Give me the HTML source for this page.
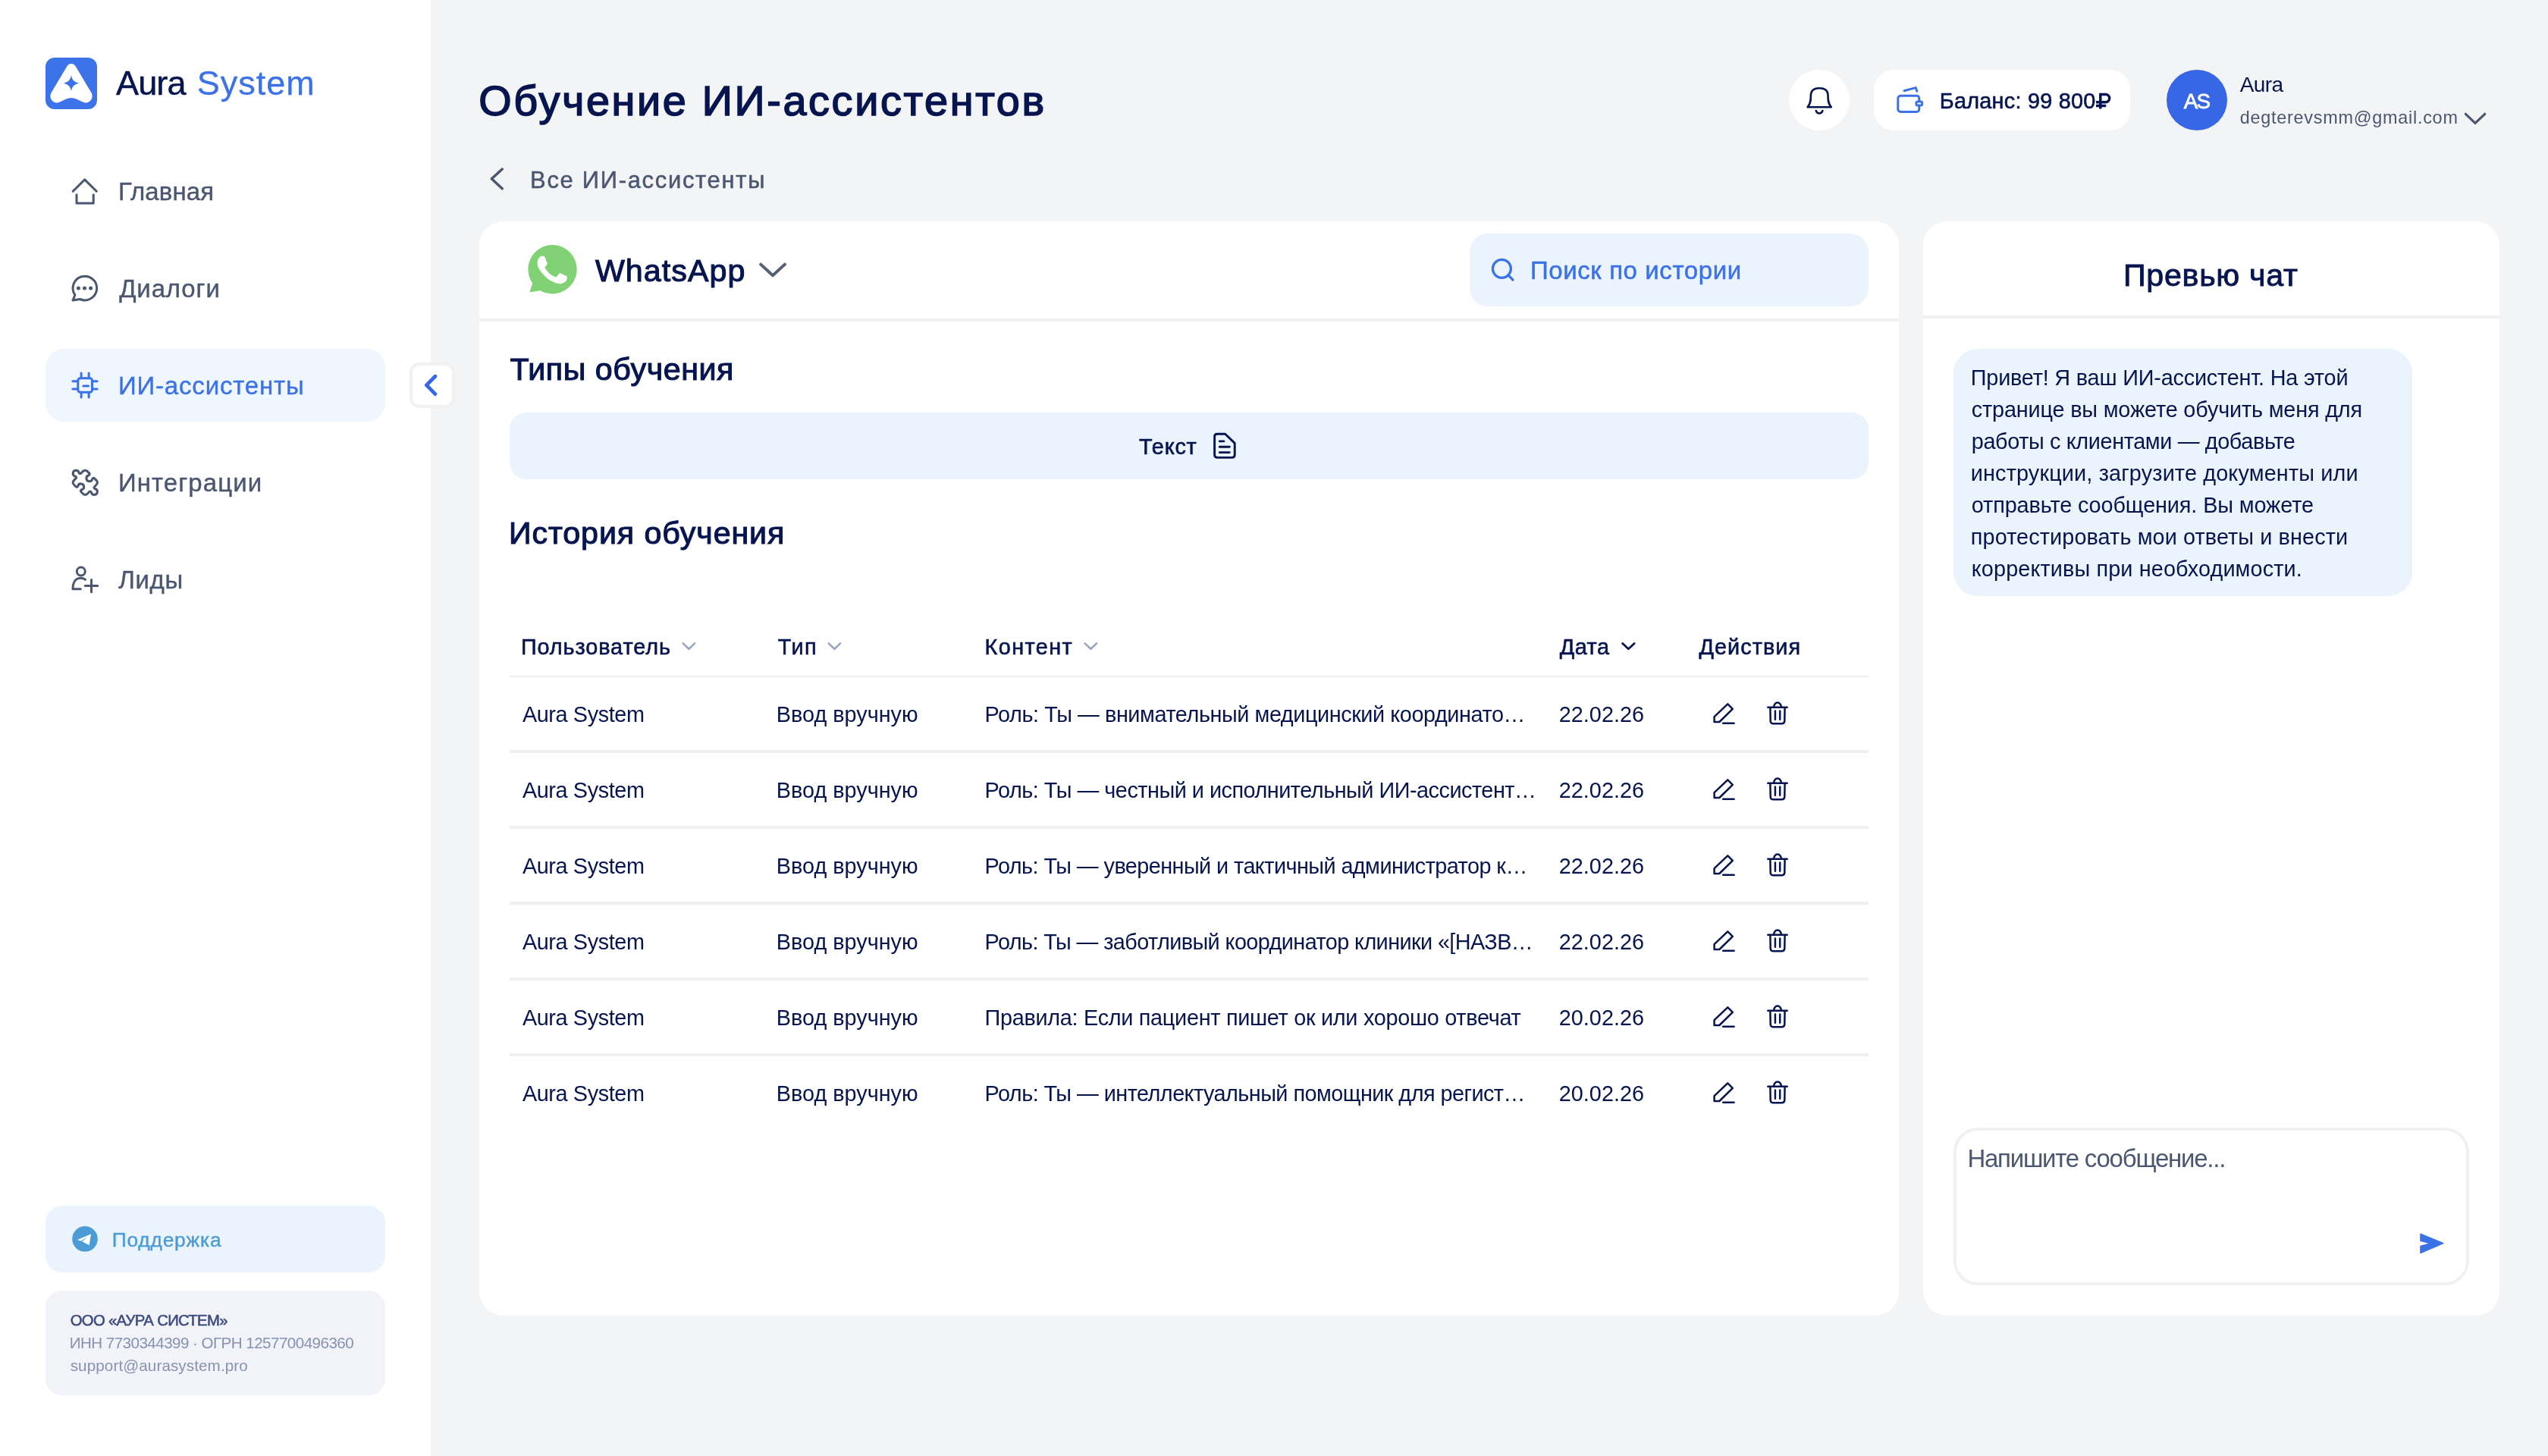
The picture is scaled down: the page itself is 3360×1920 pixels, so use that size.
<!DOCTYPE html>
<html lang="ru">
<head>
<meta charset="utf-8">
<meta name="viewport" content="width=3360">
<title>Обучение ИИ-ассистентов — Aura System</title>
<style>
*{box-sizing:border-box;margin:0;padding:0}
html,body{width:3360px;height:1920px;overflow:hidden}
body{position:relative;background:#f3f4f6;font-family:"Liberation Sans",sans-serif;color:#06154f}
.t{position:absolute;white-space:nowrap;line-height:1;font-weight:400;font-style:normal}
.abs,.ic,aside,main,section,header,nav,.tr,.rl{position:absolute}
svg{display:block;overflow:visible}
#app{position:absolute;left:0;top:0;width:3360px;height:1920px;will-change:transform}
aside{left:0;top:0;width:568px;height:1920px;background:#fff}
.logo{left:60px;top:76px;width:68px;height:68px;border-radius:12px;background:#3d73ea}
.active{left:60px;top:460px;width:448px;height:96px;border-radius:24px;background:#eff6fe}
.collapse{left:540px;top:478px;width:60px;height:60px;border-radius:13px;background:#fff;border:4px solid #f1f1f2}
.support{left:60px;top:1590px;width:448px;height:88px;border-radius:22px;background:#ebf3fc}
.info{left:60px;top:1702px;width:448px;height:138px;border-radius:22px;background:#f1f3f8}
.bell{left:2359px;top:92px;width:80px;height:80px;border-radius:50%;background:#fff}
.balance{left:2471px;top:92px;width:338px;height:80px;border-radius:26px;background:#fff}
.avatar{left:2857px;top:92px;width:80px;height:80px;border-radius:50%;background:#3767e4}
.card{left:632px;top:292px;width:1872px;height:1443px;border-radius:32px;background:#fff}
.chat{left:2536px;top:292px;width:760px;height:1443px;border-radius:32px;background:#fff}
.hr1{left:632px;top:420px;width:1872px;height:4px;background:#f0f0f1}
.hr2{left:2536px;top:416px;width:760px;height:4px;background:#f0f0f1}
.search{left:1938px;top:308px;width:526px;height:96px;border-radius:24px;background:#ebf3fd}
.typebtn{left:672px;top:544px;width:1792px;height:88px;border-radius:22px;background:#ebf3fd}
.thl{left:672px;top:891px;width:1792px;height:2px;background:#efeff0}
.rl{left:672px;width:1792px;height:4px;background:#f0f0f1}
.tr{left:0;top:0}
.bubble{left:2576px;top:460px;width:605px;height:326px;border-radius:32px;background:#ebf3fd}
.input{left:2576px;top:1487px;width:680px;height:208px;border-radius:32px;background:#fff;border:4px solid #f1f1f2}
</style>
</head>
<body>
<div id="app">

<!-- ===== SIDEBAR ===== -->
<aside>
<div class="abs logo"></div>
<svg class="ic" style="left:60px;top:76px" width="68" height="68" viewBox="60 76 68 68">
<path fill="#fff" d="M88.3 87.6 C90.5 82.8 97.5 82.8 99.7 87.6 L120.6 122.5 C124.5 130 117 138.5 109 134.5 C102 131 98.5 129.3 94 129.3 C89.5 129.3 86 131 79 134.5 C71 138.5 63.5 130 67.4 122.5 Z"/>
<path fill="#3d73ea" d="M93.9 99.1 C94.9 105.5 98.2 108.8 104.6 109.8 C98.2 110.8 94.9 114.1 93.9 120.5 C92.9 114.1 89.6 110.8 83.2 109.8 C89.6 108.8 92.9 105.5 93.9 99.1 Z"/>
</svg>
<span class="t" style="left:153.0px;top:87.0px;font-size:45px;letter-spacing:-0.876px;color:#06154f;-webkit-text-stroke:0.5px #06154f;">Aura</span><span class="t" style="left:259.7px;top:87.0px;font-size:45px;letter-spacing:0.991px;color:#3b72e8;-webkit-text-stroke:0.3px #3b72e8;">System</span>

<nav>
<svg class="ic" style="left:92px;top:232px" width="40" height="40" viewBox="92 232 40 40" fill="none" stroke="#4b5670" stroke-width="3" stroke-linecap="round" stroke-linejoin="round">
<path d="M96.2 252.2 L111.7 236.9 L127.3 252.2"/><path d="M101 256.8 V268 H123.2 V256.8"/>
</svg>
<span class="t" style="left:155.9px;top:237.0px;font-size:32.96px;letter-spacing:0.120px;color:#4b5670;-webkit-text-stroke:0.4px #4b5670;">Главная</span>
<svg class="ic" style="left:92px;top:360px" width="40" height="40" viewBox="92 360 40 40" fill="none" stroke="#4b5670" stroke-width="3" stroke-linecap="round" stroke-linejoin="round">
<path d="M96 396 L98.9 389 A15.8 15.8 0 1 1 105.6 394.5 Z"/>
<g fill="#4b5670" stroke="none"><circle cx="103.4" cy="379.9" r="2.5"/><circle cx="111.5" cy="379.9" r="2.5"/><circle cx="119.6" cy="379.9" r="2.5"/></g>
</svg>
<span class="t" style="left:157.2px;top:365.0px;font-size:32.96px;letter-spacing:0.867px;color:#4b5670;-webkit-text-stroke:0.4px #4b5670;">Диалоги</span>
<div class="abs active"></div>
<svg class="ic" style="left:92px;top:488px" width="40" height="40" viewBox="92 488 40 40" fill="none" stroke="#3b72e8" stroke-width="3" stroke-linecap="round" stroke-linejoin="round">
<rect x="102.8" y="498.7" width="18.7" height="18.6" rx="3"/>
<path d="M107.1 492 V498.7 M117.1 492 V498.7 M107.1 517.3 V523.9 M117.1 517.3 V523.9 M95.9 502.8 H102.8 M95.9 513.1 H102.8 M121.5 502.8 H128 M121.5 513.1 H128 M109.8 509 H116.6"/>
</svg>
<span class="t" style="left:155.9px;top:493.0px;font-size:32.96px;letter-spacing:0.854px;color:#3b72e8;-webkit-text-stroke:0.4px #3b72e8;">ИИ-ассистенты</span>
<svg class="ic" style="left:92.8px;top:616.7px" width="38.6" height="38.6" viewBox="0 0 24 24" fill="none" stroke="#4b5670" stroke-width="1.9" stroke-linecap="round" stroke-linejoin="round">
<path transform="matrix(-1 0 0 1 24 0)" d="M15.39 4.39a1 1 0 0 0 1.68-.474 2.5 2.5 0 1 1 3.014 3.015 1 1 0 0 0-.474 1.68l1.683 1.682a2.414 2.414 0 0 1 0 3.414L19.61 15.39a1 1 0 0 1-1.68-.474 2.5 2.5 0 1 0-3.014 3.015 1 1 0 0 1 .474 1.68l-1.683 1.682a2.414 2.414 0 0 1-3.414 0L8.61 19.61a1 1 0 0 0-1.68.474 2.5 2.5 0 1 1-3.014-3.015 1 1 0 0 0 .474-1.68l-1.683-1.682a2.414 2.414 0 0 1 0-3.414L4.39 8.61a1 1 0 0 1 1.68.474 2.5 2.5 0 1 0 3.014-3.015 1 1 0 0 1-.474-1.68l1.683-1.682a2.414 2.414 0 0 1 3.414 0z"/>
</svg>
<span class="t" style="left:155.9px;top:621.0px;font-size:32.96px;letter-spacing:1.101px;color:#4b5670;-webkit-text-stroke:0.4px #4b5670;">Интеграции</span>
<svg class="ic" style="left:92px;top:744px" width="40" height="40" viewBox="92 744 40 40" fill="none" stroke="#4b5670" stroke-width="3" stroke-linecap="round" stroke-linejoin="round">
<circle cx="106.8" cy="753.6" r="5.5"/>
<path d="M112.5 764.3 C109 761.5 103 761.5 100 764.5 C97 767.5 96 772 96 776.7 H106.3"/>
<path d="M112.3 772.6 H128.7 M120.5 764.4 V780.8"/>
</svg>
<span class="t" style="left:156.3px;top:749.0px;font-size:32.96px;letter-spacing:0.613px;color:#4b5670;-webkit-text-stroke:0.4px #4b5670;">Лиды</span>
</nav>

<div class="abs collapse"></div>
<svg class="ic" style="left:552px;top:490px" width="36" height="36" viewBox="552 490 36 36" fill="none" stroke="#3567ec" stroke-width="4.8" stroke-linecap="round" stroke-linejoin="round"><path d="M573.9 496.3 L562.4 507.9 L573.9 519.6"/></svg>

<div class="abs support"></div>
<svg class="ic" style="left:95px;top:1617px" width="34" height="34" viewBox="95 1617 34 34">
<circle cx="112" cy="1633.8" r="16.8" fill="#4a9bd6"/>
<path fill="#fff" d="M101.9 1635 L120 1627.3 L117.7 1641.9 L108.3 1637.2 L115.3 1631.1 L106.8 1636.6 Z"/>
</svg>
<span class="t" style="left:147.7px;top:1622.0px;font-size:26.3px;letter-spacing:0.830px;color:#4a9bd6;-webkit-text-stroke:0.4px #4a9bd6;">Поддержка</span>
<div class="abs info"></div>
<span class="t" style="left:92.7px;top:1731.0px;font-size:20.3px;letter-spacing:-0.662px;color:#3d4c7e;-webkit-text-stroke:0.55px #3d4c7e;">ООО «АУРА СИСТЕМ»</span><span class="t" style="left:91.7px;top:1761.0px;font-size:20.6px;letter-spacing:-0.545px;color:#8792b3;">ИНН 7730344399 · ОГРН 1257700496360</span><span class="t" style="left:92.7px;top:1791.0px;font-size:20.6px;letter-spacing:0.121px;color:#8792b3;">support@aurasystem.pro</span>
</aside>

<!-- ===== HEADER ===== -->
<header>
<h1 class="t" style="left:631.2px;top:105.0px;font-size:55.8px;letter-spacing:2.647px;color:#06154f;-webkit-text-stroke:1.6px #06154f;">Обучение ИИ-ассистентов</h1>
<svg class="ic" style="left:640px;top:218px" width="32" height="36" viewBox="640 218 32 36" fill="none" stroke="#4b5670" stroke-width="3.5" stroke-linecap="round" stroke-linejoin="round"><path d="M662.3 223 L648.3 235.8 L662.3 248.7"/></svg>
<span class="t" style="left:699.1px;top:223.0px;font-size:30.9px;letter-spacing:1.727px;color:#4b5670;-webkit-text-stroke:0.5px #4b5670;">Все ИИ-ассистенты</span>
<div class="abs bell"></div>
<svg class="ic" style="left:2379px;top:112px" width="40" height="40" viewBox="2379 112 40 40" fill="none" stroke="#06154f" stroke-width="2.6" stroke-linecap="round" stroke-linejoin="round">
<path d="M2383.6 141.2 C2388.6 136 2387.6 130 2388 124 C2388.6 118.5 2393 116.2 2399.2 116.2 C2405.4 116.2 2409.8 118.5 2410.4 124 C2410.8 130 2409.8 136 2414.8 141.2 Z"/>
<path d="M2394.8 146 C2396 150.6 2402.2 150.6 2403.4 146"/>
</svg>
<div class="abs balance"></div>
<svg class="ic" style="left:2499px;top:112px" width="40" height="40" viewBox="2499 112 40 40" fill="none" stroke="#3b72e8" stroke-width="3" stroke-linecap="round" stroke-linejoin="round">
<rect x="2502.8" y="126.2" width="28" height="21.3" rx="3.5"/>
<rect x="2526.9" y="134.1" width="7.8" height="4.8" rx="2" fill="#fff"/>
<path d="M2510.9 119.7 L2526.3 115.6 L2527.8 120.2"/>
</svg>
<span class="t" style="left:2557.8px;top:119.0px;font-size:28.84px;letter-spacing:0.246px;color:#06154f;-webkit-text-stroke:0.6px #06154f;">Баланс: 99 800</span>
<svg class="ic" style="left:2760px;top:118px" width="28" height="30" viewBox="2760 118 28 30" fill="none" stroke="#06154f" stroke-width="3.5" stroke-linejoin="miter"><path d="M2769.8 143.4 V124.5 H2776.6 A5.1 5.1 0 0 1 2776.6 134.7 H2764 M2764 139.4 H2777.2"/></svg>
<div class="abs avatar"></div>
<span class="t" style="left:2879.7px;top:120.0px;font-size:27.81px;letter-spacing:-1.840px;color:#ffffff;-webkit-text-stroke:0.8px #ffffff;">AS</span><span class="t" style="left:2953.7px;top:98.0px;font-size:28px;letter-spacing:-0.591px;color:#06154f;">Aura</span><span class="t" style="left:2953.7px;top:144.0px;font-size:23.4px;letter-spacing:0.758px;color:#4b5670;">degterevsmm@gmail.com</span>
<svg class="ic" style="left:3246px;top:144px" width="36" height="24" viewBox="3246 144 36 24" fill="none" stroke="#4b5670" stroke-width="3.2" stroke-linecap="round" stroke-linejoin="round"><path d="M3251.4 150.3 L3264 162.3 L3276.7 150.3"/></svg>
</header>

<!-- ===== MAIN CARD ===== -->
<main>
<div class="abs card"></div>
<svg class="ic" style="left:696px;top:323px" width="65" height="65" viewBox="0 0 65 65">
<path fill="#80d275" d="M32.3 0 A32.2 32.2 0 1 1 16.5 60.2 L2.5 62.3 L6.2 50.6 A32.2 32.2 0 0 1 32.3 0 Z"/>
<g transform="translate(32.3 32.5) scale(1.22) translate(-32.5 -31.7) translate(0.3 0) scale(2.667)"><path fill="#fff" d="M17.472 14.382c-.297-.149-1.758-.867-2.03-.967-.273-.099-.471-.148-.67.15-.197.297-.767.966-.94 1.164-.173.199-.347.223-.644.075-.297-.15-1.255-.463-2.39-1.475-.883-.788-1.48-1.761-1.653-2.059-.173-.297-.018-.458.13-.606.134-.133.298-.347.446-.52.149-.174.198-.298.298-.497.099-.198.05-.371-.025-.52-.075-.149-.669-1.612-.916-2.207-.242-.579-.487-.5-.669-.51-.173-.008-.371-.01-.57-.01-.198 0-.52.074-.792.372-.272.297-1.04 1.016-1.04 2.479 0 1.462 1.065 2.875 1.213 3.074.149.198 2.096 3.2 5.077 4.487.709.306 1.262.489 1.694.625.712.227 1.36.195 1.871.118.571-.085 1.758-.719 2.006-1.413.248-.694.248-1.289.173-1.413-.074-.124-.272-.198-.57-.347z"/></g>
</svg>
<span class="t" style="left:784.9px;top:337.0px;font-size:41.2px;letter-spacing:1.057px;color:#06154f;-webkit-text-stroke:1.1px #06154f;">WhatsApp</span>
<svg class="ic" style="left:998px;top:342px" width="44" height="28" viewBox="998 342 44 28" fill="none" stroke="#555f75" stroke-width="4" stroke-linecap="round" stroke-linejoin="round"><path d="M1003.2 348.6 L1019 363.2 L1034.9 348.6"/></svg>
<div class="abs search"></div>
<svg class="ic" style="left:1964px;top:338px" width="36" height="36" viewBox="1964 338 36 36" fill="none" stroke="#3b72e8" stroke-width="3.2" stroke-linecap="round"><circle cx="1980.4" cy="354.3" r="12"/><path d="M1989.2 363.2 L1995 369.1"/></svg>
<span class="t" style="left:2018.0px;top:341.0px;font-size:32.96px;letter-spacing:0.616px;color:#3b72e8;-webkit-text-stroke:0.5px #3b72e8;">Поиск по истории</span>
<div class="abs hr1"></div>
<h2 class="t" style="left:672.4px;top:467.0px;font-size:41.2px;letter-spacing:0.549px;color:#06154f;-webkit-text-stroke:1.1px #06154f;">Типы обучения</h2>
<div class="abs typebtn"></div>
<span class="t" style="left:1502.1px;top:575.0px;font-size:28.84px;letter-spacing:0.782px;color:#06154f;-webkit-text-stroke:0.6px #06154f;">Текст</span>
<svg class="ic" style="left:1598px;top:568px" width="34" height="40" viewBox="1598 568 34 40" fill="none" stroke="#06154f" stroke-width="2.9" stroke-linecap="round" stroke-linejoin="round">
<path d="M1605.2 572.2 H1615.6 L1628.2 584.4 V599.8 Q1628.2 603.4 1624.6 603.4 H1605.2 Q1601.6 603.4 1601.6 599.8 V575.8 Q1601.6 572.2 1605.2 572.2 Z"/>
<path d="M1608.3 581.9 H1613.9 M1608.3 589.2 H1621.3 M1608.3 596.6 H1621.3"/>
</svg>
<h2 class="t" style="left:671.0px;top:683.0px;font-size:41.2px;letter-spacing:0.902px;color:#06154f;-webkit-text-stroke:1.1px #06154f;">История обучения</h2>
<span class="t" style="left:686.9px;top:839.0px;font-size:28.84px;letter-spacing:0.904px;color:#06154f;-webkit-text-stroke:0.6px #06154f;">Пользователь</span><span class="t" style="left:1025.8px;top:839.0px;font-size:28.84px;letter-spacing:1.427px;color:#06154f;-webkit-text-stroke:0.6px #06154f;">Тип</span><span class="t" style="left:1298.5px;top:839.0px;font-size:28.84px;letter-spacing:1.404px;color:#06154f;-webkit-text-stroke:0.6px #06154f;">Контент</span><span class="t" style="left:2056.7px;top:839.0px;font-size:28.84px;letter-spacing:0.499px;color:#06154f;-webkit-text-stroke:0.6px #06154f;">Дата</span><span class="t" style="left:2240.5px;top:839.0px;font-size:28.84px;letter-spacing:1.029px;color:#06154f;-webkit-text-stroke:0.6px #06154f;">Действия</span>
<svg class="ic" style="left:896px;top:842px" width="24" height="20" viewBox="896 842 24 20" fill="none" stroke="#9aa5c4" stroke-width="2.6" stroke-linecap="round" stroke-linejoin="round"><path d="M900.6 848.4 L908.4 855.8 L916.1 848.4"/></svg>
<svg class="ic" style="left:1088px;top:842px" width="24" height="20" viewBox="896 842 24 20" fill="none" stroke="#9aa5c4" stroke-width="2.6" stroke-linecap="round" stroke-linejoin="round"><path d="M900.6 848.4 L908.4 855.8 L916.1 848.4"/></svg>
<svg class="ic" style="left:1426px;top:842px" width="24" height="20" viewBox="896 842 24 20" fill="none" stroke="#9aa5c4" stroke-width="2.6" stroke-linecap="round" stroke-linejoin="round"><path d="M900.6 848.4 L908.4 855.8 L916.1 848.4"/></svg>
<svg class="ic" style="left:2135px;top:842px" width="24" height="20" viewBox="896 842 24 20" fill="none" stroke="#06154f" stroke-width="2.8" stroke-linecap="round" stroke-linejoin="round"><path d="M900.6 848.4 L908.4 855.8 L916.1 848.4"/></svg>
<div class="abs thl"></div>
<div class="tr"><span class="t" style="left:688.9px;top:928.0px;font-size:28.84px;letter-spacing:-0.390px;color:#06154f;">Aura System</span><span class="t" style="left:1023.8px;top:928.0px;font-size:28.84px;letter-spacing:-0.004px;color:#06154f;">Ввод вручную</span><span class="t" style="left:1298.6px;top:928.0px;font-size:28.84px;letter-spacing:-0.430px;color:#06154f;">Роль: Ты — внимательный медицинский координато…</span><span class="t" style="left:2055.7px;top:928.0px;font-size:28.84px;letter-spacing:0.031px;color:#06154f;">22.02.26</span>
<svg class="ic" style="left:2256px;top:922px" width="36" height="36" viewBox="2256 922 36 36" fill="none" stroke="#06154f" stroke-width="2.5" stroke-linejoin="round" stroke-linecap="round"><path d="M2278.3 928.3 L2284.8 934.8 L2267.3 952 L2260.6 952 L2260.6 945.2 Z"/>
<path d="M2272.2 953.7 H2286.6"/></svg>
<svg class="ic" style="left:2326px;top:922px" width="36" height="36" viewBox="2326 922 36 36" fill="none" stroke="#06154f" stroke-width="2.5" stroke-linejoin="round" stroke-linecap="round"><path d="M2331.3 932.8 H2356.7"/>
<path d="M2339.1 932.8 A4.9 6.4 0 0 1 2348.9 932.8"/>
<path d="M2334.4 933.5 L2334.7 950.4 Q2334.8 954.3 2338.7 954.3 H2349.3 Q2353.2 954.3 2353.3 950.4 L2353.6 933.5"/>
<path d="M2340.9 937.6 V948.8 M2347.2 937.6 V948.8"/></svg>
<i class="rl" style="top:989px"></i></div>
<div class="tr"><span class="t" style="left:688.9px;top:1028.0px;font-size:28.84px;letter-spacing:-0.390px;color:#06154f;">Aura System</span><span class="t" style="left:1023.8px;top:1028.0px;font-size:28.84px;letter-spacing:-0.004px;color:#06154f;">Ввод вручную</span><span class="t" style="left:1298.6px;top:1028.0px;font-size:28.84px;letter-spacing:-0.492px;color:#06154f;">Роль: Ты — честный и исполнительный ИИ-ассистент…</span><span class="t" style="left:2055.7px;top:1028.0px;font-size:28.84px;letter-spacing:0.031px;color:#06154f;">22.02.26</span>
<svg class="ic" style="left:2256px;top:1022px" width="36" height="36" viewBox="2256 922 36 36" fill="none" stroke="#06154f" stroke-width="2.5" stroke-linejoin="round" stroke-linecap="round"><path d="M2278.3 928.3 L2284.8 934.8 L2267.3 952 L2260.6 952 L2260.6 945.2 Z"/>
<path d="M2272.2 953.7 H2286.6"/></svg>
<svg class="ic" style="left:2326px;top:1022px" width="36" height="36" viewBox="2326 922 36 36" fill="none" stroke="#06154f" stroke-width="2.5" stroke-linejoin="round" stroke-linecap="round"><path d="M2331.3 932.8 H2356.7"/>
<path d="M2339.1 932.8 A4.9 6.4 0 0 1 2348.9 932.8"/>
<path d="M2334.4 933.5 L2334.7 950.4 Q2334.8 954.3 2338.7 954.3 H2349.3 Q2353.2 954.3 2353.3 950.4 L2353.6 933.5"/>
<path d="M2340.9 937.6 V948.8 M2347.2 937.6 V948.8"/></svg>
<i class="rl" style="top:1089px"></i></div>
<div class="tr"><span class="t" style="left:688.9px;top:1128.0px;font-size:28.84px;letter-spacing:-0.390px;color:#06154f;">Aura System</span><span class="t" style="left:1023.8px;top:1128.0px;font-size:28.84px;letter-spacing:-0.004px;color:#06154f;">Ввод вручную</span><span class="t" style="left:1298.6px;top:1128.0px;font-size:28.84px;letter-spacing:-0.562px;color:#06154f;">Роль: Ты — уверенный и тактичный администратор к…</span><span class="t" style="left:2055.7px;top:1128.0px;font-size:28.84px;letter-spacing:0.031px;color:#06154f;">22.02.26</span>
<svg class="ic" style="left:2256px;top:1122px" width="36" height="36" viewBox="2256 922 36 36" fill="none" stroke="#06154f" stroke-width="2.5" stroke-linejoin="round" stroke-linecap="round"><path d="M2278.3 928.3 L2284.8 934.8 L2267.3 952 L2260.6 952 L2260.6 945.2 Z"/>
<path d="M2272.2 953.7 H2286.6"/></svg>
<svg class="ic" style="left:2326px;top:1122px" width="36" height="36" viewBox="2326 922 36 36" fill="none" stroke="#06154f" stroke-width="2.5" stroke-linejoin="round" stroke-linecap="round"><path d="M2331.3 932.8 H2356.7"/>
<path d="M2339.1 932.8 A4.9 6.4 0 0 1 2348.9 932.8"/>
<path d="M2334.4 933.5 L2334.7 950.4 Q2334.8 954.3 2338.7 954.3 H2349.3 Q2353.2 954.3 2353.3 950.4 L2353.6 933.5"/>
<path d="M2340.9 937.6 V948.8 M2347.2 937.6 V948.8"/></svg>
<i class="rl" style="top:1189px"></i></div>
<div class="tr"><span class="t" style="left:688.9px;top:1228.0px;font-size:28.84px;letter-spacing:-0.390px;color:#06154f;">Aura System</span><span class="t" style="left:1023.8px;top:1228.0px;font-size:28.84px;letter-spacing:-0.004px;color:#06154f;">Ввод вручную</span><span class="t" style="left:1298.6px;top:1228.0px;font-size:28.84px;letter-spacing:-0.590px;color:#06154f;">Роль: Ты — заботливый координатор клиники «[НАЗВ…</span><span class="t" style="left:2055.7px;top:1228.0px;font-size:28.84px;letter-spacing:0.031px;color:#06154f;">22.02.26</span>
<svg class="ic" style="left:2256px;top:1222px" width="36" height="36" viewBox="2256 922 36 36" fill="none" stroke="#06154f" stroke-width="2.5" stroke-linejoin="round" stroke-linecap="round"><path d="M2278.3 928.3 L2284.8 934.8 L2267.3 952 L2260.6 952 L2260.6 945.2 Z"/>
<path d="M2272.2 953.7 H2286.6"/></svg>
<svg class="ic" style="left:2326px;top:1222px" width="36" height="36" viewBox="2326 922 36 36" fill="none" stroke="#06154f" stroke-width="2.5" stroke-linejoin="round" stroke-linecap="round"><path d="M2331.3 932.8 H2356.7"/>
<path d="M2339.1 932.8 A4.9 6.4 0 0 1 2348.9 932.8"/>
<path d="M2334.4 933.5 L2334.7 950.4 Q2334.8 954.3 2338.7 954.3 H2349.3 Q2353.2 954.3 2353.3 950.4 L2353.6 933.5"/>
<path d="M2340.9 937.6 V948.8 M2347.2 937.6 V948.8"/></svg>
<i class="rl" style="top:1289px"></i></div>
<div class="tr"><span class="t" style="left:688.9px;top:1328.0px;font-size:28.84px;letter-spacing:-0.390px;color:#06154f;">Aura System</span><span class="t" style="left:1023.8px;top:1328.0px;font-size:28.84px;letter-spacing:-0.004px;color:#06154f;">Ввод вручную</span><span class="t" style="left:1298.6px;top:1328.0px;font-size:28.84px;letter-spacing:-0.294px;color:#06154f;">Правила: Если пациент пишет ок или хорошо отвечат</span><span class="t" style="left:2055.7px;top:1328.0px;font-size:28.84px;letter-spacing:0.031px;color:#06154f;">20.02.26</span>
<svg class="ic" style="left:2256px;top:1322px" width="36" height="36" viewBox="2256 922 36 36" fill="none" stroke="#06154f" stroke-width="2.5" stroke-linejoin="round" stroke-linecap="round"><path d="M2278.3 928.3 L2284.8 934.8 L2267.3 952 L2260.6 952 L2260.6 945.2 Z"/>
<path d="M2272.2 953.7 H2286.6"/></svg>
<svg class="ic" style="left:2326px;top:1322px" width="36" height="36" viewBox="2326 922 36 36" fill="none" stroke="#06154f" stroke-width="2.5" stroke-linejoin="round" stroke-linecap="round"><path d="M2331.3 932.8 H2356.7"/>
<path d="M2339.1 932.8 A4.9 6.4 0 0 1 2348.9 932.8"/>
<path d="M2334.4 933.5 L2334.7 950.4 Q2334.8 954.3 2338.7 954.3 H2349.3 Q2353.2 954.3 2353.3 950.4 L2353.6 933.5"/>
<path d="M2340.9 937.6 V948.8 M2347.2 937.6 V948.8"/></svg>
<i class="rl" style="top:1389px"></i></div>
<div class="tr"><span class="t" style="left:688.9px;top:1428.0px;font-size:28.84px;letter-spacing:-0.390px;color:#06154f;">Aura System</span><span class="t" style="left:1023.8px;top:1428.0px;font-size:28.84px;letter-spacing:-0.004px;color:#06154f;">Ввод вручную</span><span class="t" style="left:1298.6px;top:1428.0px;font-size:28.84px;letter-spacing:-0.542px;color:#06154f;">Роль: Ты — интеллектуальный помощник для регист…</span><span class="t" style="left:2055.7px;top:1428.0px;font-size:28.84px;letter-spacing:0.031px;color:#06154f;">20.02.26</span>
<svg class="ic" style="left:2256px;top:1422px" width="36" height="36" viewBox="2256 922 36 36" fill="none" stroke="#06154f" stroke-width="2.5" stroke-linejoin="round" stroke-linecap="round"><path d="M2278.3 928.3 L2284.8 934.8 L2267.3 952 L2260.6 952 L2260.6 945.2 Z"/>
<path d="M2272.2 953.7 H2286.6"/></svg>
<svg class="ic" style="left:2326px;top:1422px" width="36" height="36" viewBox="2326 922 36 36" fill="none" stroke="#06154f" stroke-width="2.5" stroke-linejoin="round" stroke-linecap="round"><path d="M2331.3 932.8 H2356.7"/>
<path d="M2339.1 932.8 A4.9 6.4 0 0 1 2348.9 932.8"/>
<path d="M2334.4 933.5 L2334.7 950.4 Q2334.8 954.3 2338.7 954.3 H2349.3 Q2353.2 954.3 2353.3 950.4 L2353.6 933.5"/>
<path d="M2340.9 937.6 V948.8 M2347.2 937.6 V948.8"/></svg>
</div>
</main>

<!-- ===== CHAT PREVIEW ===== -->
<section>
<div class="abs chat"></div>
<h2 class="t" style="left:2800.0px;top:343.0px;font-size:41.2px;letter-spacing:0.717px;color:#06154f;-webkit-text-stroke:0.9px #06154f;">Превью чат</h2>
<div class="abs hr2"></div>
<div class="abs bubble"></div>
<span class="t" style="left:2598.8px;top:484.0px;font-size:28.84px;letter-spacing:-0.196px;color:#06154f;">Привет! Я ваш ИИ-ассистент. На этой</span>
<span class="t" style="left:2599.8px;top:526.0px;font-size:28.84px;letter-spacing:-0.171px;color:#06154f;">странице вы можете обучить меня для</span>
<span class="t" style="left:2599.8px;top:568.0px;font-size:28.84px;letter-spacing:-0.376px;color:#06154f;">работы с клиентами — добавьте</span>
<span class="t" style="left:2598.8px;top:610.0px;font-size:28.84px;letter-spacing:0.145px;color:#06154f;">инструкции, загрузите документы или</span>
<span class="t" style="left:2599.8px;top:652.0px;font-size:28.84px;letter-spacing:-0.110px;color:#06154f;">отправьте сообщения. Вы можете</span>
<span class="t" style="left:2598.8px;top:694.0px;font-size:28.84px;letter-spacing:0.099px;color:#06154f;">протестировать мои ответы и внести</span>
<span class="t" style="left:2599.8px;top:736.0px;font-size:28.84px;letter-spacing:0.120px;color:#06154f;">коррективы при необходимости.</span>
<div class="abs input"></div>
<span class="t" style="left:2594.4px;top:1512.0px;font-size:32.96px;letter-spacing:-1.216px;color:#4b5670;">Напишите сообщение...</span>
<svg class="ic" style="left:3188px;top:1622px" width="38" height="36" viewBox="3188 1622 38 36"><path fill="#3b72e8" stroke="#3b72e8" stroke-width="1.6" stroke-linejoin="round" d="M3192 1627.2 L3221.6 1639.6 L3192 1652.2 L3192 1643.2 L3206 1639.6 L3192 1636.2 Z"/></svg>
</section>
</div>
</body>
</html>
